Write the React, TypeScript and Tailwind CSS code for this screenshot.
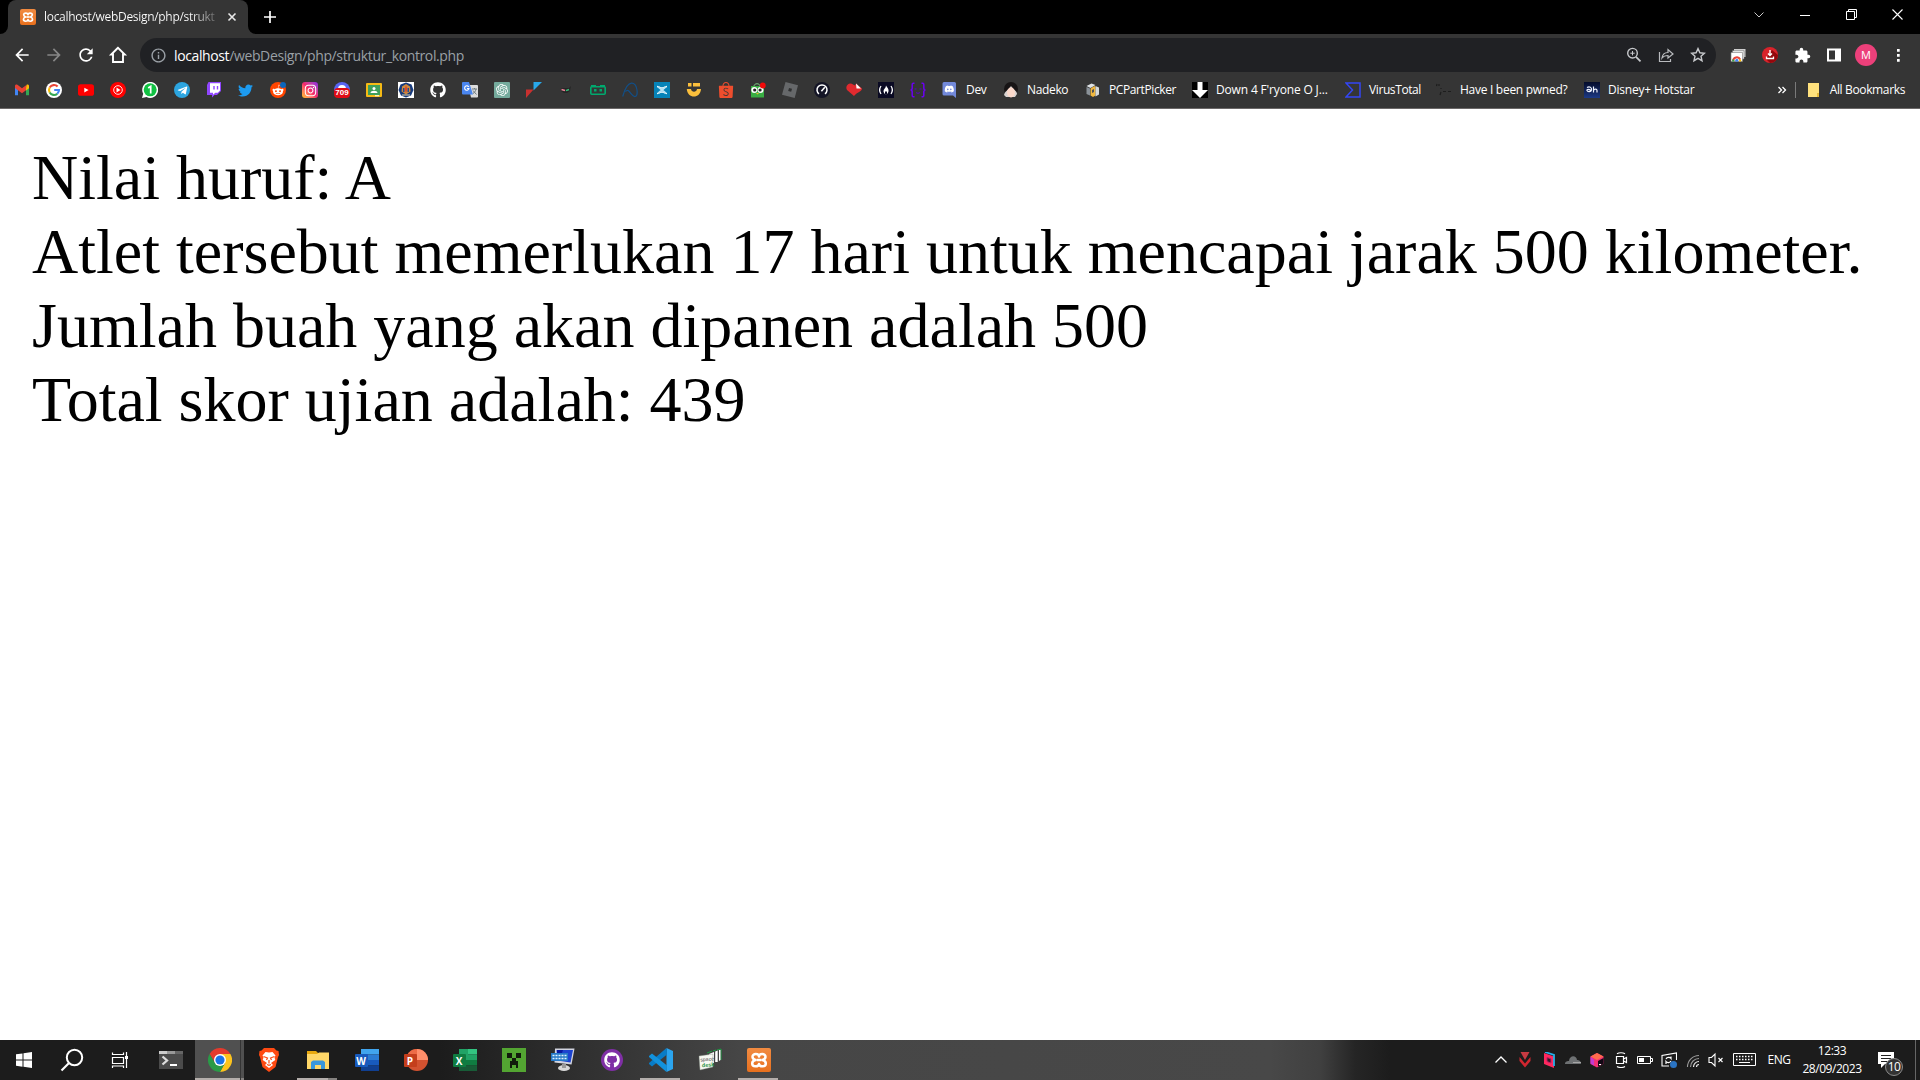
import React from "react";
import { FaTwitter, FaGithub, FaTelegramPlane, FaDiscord, FaRedditAlien, FaInstagram } from "react-icons/fa";
import { SiShopee, SiOpenai } from "react-icons/si";
import { MdArrowBack, MdArrowForward, MdRefresh, MdExtension, MdInfoOutline } from "react-icons/md";

const S = ({ children, s = 16, vb = "0 0 16 16" }: { children: React.ReactNode; s?: number; vb?: string }) => (
  <svg width={s} height={s} viewBox={vb} fill="none" className="block shrink-0">{children}</svg>
);

const Chip = ({ className, children }: { className: string; children?: React.ReactNode }) => (
  <div className={"flex size-4 shrink-0 items-center justify-center overflow-hidden " + className}>{children}</div>
);

const GoogleG = () => (
  <g strokeWidth="2.1" fill="none">
    <path d="M11.6 4.6A5 5 0 0 0 3.7 5.5" stroke="#ea4335" />
    <path d="M3.7 5.5A5 5 0 0 0 3.7 10.5" stroke="#fbbc05" />
    <path d="M3.7 10.5A5 5 0 0 0 11.3 11.7" stroke="#34a853" />
    <path d="M11.3 11.7A5 5 0 0 0 13 8H8.2" stroke="#4285f4" />
  </g>
);

const iconMarks: React.ReactNode[] = [
  <S>
    <path d="M1 4v9.3h3V7.5L1 4Z" fill="#4285f4" />
    <path d="M12 7.5v5.8h3V4l-3 3.5Z" fill="#34a853" />
    <path d="M12 4.5v4l3-2.3V4c0-1.5-1.500-1.900-2.400-1.200L12 4.500Z" fill="#fbbc04" />
    <path d="M1 4c0-1.500 1.500-1.900 2.400-1.200L8 6.300l4.400-3.300L12 8.200 8 11.200 4 8.200 1 6Z" fill="#ea4335" />
  </S>,
  <S><circle cx="8" cy="8" r="8" fill="#fff" /><GoogleG /></S>,
  <S><rect y="2.300" width="16" height="11.500" rx="2.600" fill="#f00" /><path d="m6.300 5.700 4.300 2.400-4.300 2.400Z" fill="#fff" /></S>,
  <S><circle cx="8" cy="8" r="8" fill="#f00" /><circle cx="8" cy="8" r="4.300" stroke="#fff" strokeWidth=".9" /><path d="m6.500 5.600 4 2.400-4 2.400Z" fill="#fff" /></S>,
  <S><path d="M0 16 1.200 11.800A8 8 0 1 1 4.500 15Z" fill="#fff" /><circle cx="8.200" cy="7.800" r="6.500" fill="#12c143" /><path d="M6.200 6 8.700 4.300v7.200" stroke="#fff" strokeWidth="1.700" /></S>,
  <Chip className="rounded-full bg-[#2ca5e0]"><FaTelegramPlane size={11} color="#fff" /></Chip>,
  <S>
    <path d="M2.500 0H15v9l-4 4H8.500L6 15.500V13H1V3Z" fill="#9146ff" />
    <path d="M4 1.200h10v7.300l-2.200 2.200H9.300L7 12.700v-2H4Z" fill="#fff" />
    <path d="M8 4v3.500M11.500 4v3.500" stroke="#9146ff" strokeWidth="1.400" />
  </S>,
  <FaTwitter size={15} color="#1d9bf0" />,
  <div className="relative size-4"><Chip className="rounded-full bg-[#ff4500]"><FaRedditAlien size={12} color="#fff" /></Chip><i className="absolute top-0 left-2.5 size-1.5 rounded-full bg-[#0b66bd]" /></div>,
  <Chip className="rounded-[3px] bg-linear-to-tr from-[#ffc107] via-[#f4266b] to-[#8a1ee8]"><FaInstagram size={13} color="#fff" /></Chip>,
  <div className="relative size-4">
    <div className="size-4 rounded-full bg-[#5865f2]" />
    <i className="absolute top-[3px] left-[4px] h-1 w-2 rounded-t bg-white" />
    <b className="absolute top-[6px] left-0 flex h-[10px] w-4 items-center justify-center rounded-[4px] bg-[#e00b14] font-['Liberation_Sans'] text-[8px] leading-none text-white">709</b>
  </div>,
  <S><rect y="1" width="16" height="14" rx="1" fill="#f5ba15" /><rect x="2" y="3" width="12" height="10" fill="#3f9f5b" /><circle cx="8" cy="6.500" r="1.500" fill="#fff" /><path d="M4.500 11c0-3 7-3 7 0Z" fill="#fff" /><path d="M9 13h4v1.300H9Z" fill="#fff1b8" /></S>,
  <S>
    <rect width="16" height="16" fill="#fff" /><path d="m8 .5 5.500 2L15.500 8 13 13.500 8 15.500l-5-2L.5 8l2-5.500Z" fill="#163a7c" />
    <path d="M4 4.500 8 2l4 2.500.5 5L8 12.500 3.500 9.500Z" fill="#cf8a3c" /><path d="M5 6h1.500v4H5ZM9.500 6H11v4H9.500Z" fill="#27498d" /><path d="M8 3.500 9.400 7 8 11 6.600 7Z" fill="#d9472b" /><path d="M4 13h8" stroke="#e8d3a5" />
  </S>,
  <FaGithub size={16} color="#fff" />,
  <S>
    <path d="M6 3h9a1 1 0 0 1 1 1v10a1 1 0 0 1-1 1.500H9Z" fill="#dcdcdc" /><path d="M0 1a1 1 0 0 1 1-1h6l4 12.500H1a1 1 0 0 1-1-1Z" fill="#4a86f0" />
    <path d="M6.800 5A2.200 2.200 0 1 0 7 6.500H5" stroke="#fff" strokeWidth="1.100" /><path d="M10 7h5M12.500 6v1M14 7c-.5 2.500-1.500 3.500-3 4.500M11 8.500l3.500 4" stroke="#6f7b80" />
  </S>,
  <Chip className="rounded-[1px] bg-[#74aa9c]"><SiOpenai size={12} color="#fff" /></Chip>,
  <S><path d="M7.500 0H16L7.500 8.500Z" fill="#28a8ea" /><path d="M0 7.500h7.500L0 16Z" fill="#c9302f" /></S>,
  <S><path d="M3 6h8l2-2-1 5-3 2H6L3 9Z" fill="#262626" /><path d="m3.500 7.500 3.500 1" stroke="#ee8298" strokeWidth="1.400" /><path d="m8 8.700 3-1.200" stroke="#35bd78" strokeWidth="1.400" /></S>,
  <S><rect x=".8" y="4.700" width="14.400" height="7.500" rx="1" stroke="#00a96e" strokeWidth="1.600" /><path d="M1 3h5v2H1ZM10 3h5v2h-5Z" fill="#00a96e" /><path d="M4 7h2.500v2.500H4ZM9.500 7H12v2.500H9.500Z" fill="#00a96e" /></S>,
  <S><path d="M.7 14.500C2.500 8 5 1.500 9.500 1.200c6-.3 7 12 3.800 13.300-2.500 1-4.300-3.500-6.500-5.500-1.300-1.200-2.500-.5-3.300.7" stroke="#124f87" strokeWidth="1.200" /></S>,
  <S><rect width="16" height="16" fill="#0683b8" /><path d="M3 4.500c1.500 0 2.500 1.500 5 1.500s3.500-1.500 5-1.500M3 11.500c1.500 0 2.500-1.500 5-1.500s3.500 1.500 5 1.500" stroke="#e8f7fc" strokeWidth="1.300" /><path d="m4.500 5 7 6M11.500 5l-7 6" stroke="#b9e2f2" strokeWidth="1.800" /></S>,
  <S><path d="M2 1h3.500v3.500H2ZM7 1h7v3.500H7Z" fill="#fbbf3c" /><path d="M.8 7h4.200c.3 3.500 5.700 3.500 6 0h4c-.5 10-13.700 10-14.200 0Z" fill="#fbbf3c" /></S>,
  <SiShopee size={16} color="#ee4d2d" />,
  <S>
    <path d="M1 4h13v11.500H1Z" fill="#39ae43" /><path d="M4 4c0-3 6-3 6 0" stroke="#7bc67f" /><circle cx="4.300" cy="8" r="3" fill="#fff" /><circle cx="10.500" cy="8" r="3" fill="#fff" />
    <circle cx="4.700" cy="8" r="1.600" fill="#222" /><circle cx="10.100" cy="8" r="1.600" fill="#222" /><path d="m6 11 1.500 1.500L9 11Z" fill="#f6b62c" /><circle cx="12.800" cy="3.500" r="2.900" fill="#f20a0a" />
  </S>,
  <S><path d="M3.500 0 16 3.300 12.700 16 0 12.700Z" fill="#66686a" /><path d="m7 6 3 .8-.8 3-3-.8Z" fill="#303132" /></S>,
  <S><circle cx="8" cy="8" r="8" fill="#141526" /><path d="M5 11.900A5 5 0 1 1 11 11.900" stroke="#fff" strokeWidth="1.500" /><path d="m7.400 9.300 3.400-4" stroke="#fff" strokeWidth="1.500" /></S>,
  <S><path d="M8 14 1 8C-1.500 4 3.500-.5 7 2.500l2 1 1-2 6 5c0 3-4 3-8 7.500Z" fill="#e12a2f" /><path d="m10 1.500 5 5h-4.500Z" fill="#fff" /></S>,
  <S><rect width="16" height="16" fill="#0a0a23" /><path d="M3 4c-1.700 2.500-1.700 5.500 0 8M13 4c1.700 2.500 1.700 5.500 0 8" stroke="#fff" strokeWidth="1.300" /><path d="M8 3.500c1.200 2 3 3.500 2.500 5.800C10.200 11 9.500 11.800 8 12.500 6.500 11.800 5.700 11 5.500 9.300 5.400 7 8 6 8 3.500Z" fill="#fff" /><path d="M8 9.500v3" stroke="#0a0a23" strokeWidth="2" /></S>,
  <S><path d="M4.500 1.200H3.200Q2.200 1.200 2.200 2.500V6Q2.200 8 .5 8 2.200 8 2.200 10v3.500q0 1.300 1 1.300h1.300M11.500 1.200h1.300q1 0 1 1.300V6q0 2 1.700 2-1.700 0-1.700 2v3.500q0 1.300-1 1.300h-1.300" stroke="#6b00f0" strokeWidth="1.500" /><path d="M4.500 7h2M9.500 7h2M6 10.500c1 1 3 1 4 0" stroke="#5a00c8" /></S>,
];

const DiscordOld = (
  <S><path d="M2 0h10.500A1.500 1.500 0 0 1 14 1.500V16l-3-2.500H2A1.500 1.500 0 0 1 .5 12V1.500A1.500 1.500 0 0 1 2 0Z" fill="#7289da" /><g transform="translate(2.300 2)"><FaDiscord size={10} color="#fff" /></g></S>
);

/* w is the distance from one entry's start to the next one's */
const labelled: { t: string; w: string; ls: string; icon: React.ReactNode }[] = [
  { t: "Dev", w: "w-[61px]", ls: "tracking-[-0.3px]", icon: DiscordOld },
  { t: "Nadeko", w: "w-[82px]", ls: "tracking-[-0.35px]", icon: <S><circle cx="8" cy="7" r="7" fill="#171415" /><path d="M1 13c1-4 4-4.500 7-9 3 4.500 6 5 6 8l-2 3H3Z" fill="#d9d4d2" /><ellipse cx="8" cy="10.500" rx="4" ry="5" fill="#fbd9cb" /></S> },
  { t: "PCPartPicker", w: "w-[107px]", ls: "tracking-[-0.4px]", icon: <S><path d="m1.500 4 5-2.500 4 1.500-5 3Z" fill="#dfe3e6" /><path d="m1.500 5 3.500 1.500v7L1.500 12Z" fill="#8a9198" /><path d="m5.500 6.500 4-2.500 1 1v8.500L8 15l-2.500-1.500Z" fill="#f0b73e" /><path d="M10.500 4 14 5.500v7l-3.500 2Z" fill="#d3d7da" /><path d="m7 8 2-1v3L7 11Z" fill="#4b4f55" /></S> },
  { t: "Down 4 F'ryone O J...", w: "w-[153px]", ls: "tracking-[-0.16px]", icon: <S><rect width="16" height="16" fill="#000" /><path d="M5.500 0h5v8H16l-8 8-8-8h5.500Z" fill="#fff" /></S> },
  { t: "VirusTotal", w: "w-[91px]", ls: "tracking-[-0.4px]", icon: <S><path d="M1 1h14v14H1l6.500-7Z" stroke="#3346f5" strokeWidth="1.500" /></S> },
  { t: "Have I been pwned?", w: "w-[148px]", ls: "tracking-[-0.28px]", icon: <S><path d="m1 2-.5 2M3 2v2M5 6v1M5 10l-1 3M7 9.500h3M12 9.500h3" stroke="#1d1d1d" strokeWidth="1.200" /></S> },
  { t: "Disney+ Hotstar", w: "w-[120px]", ls: "tracking-[-0.2px]", icon: <Chip className="bg-linear-to-b from-[#050c2b] to-[#1d3a86]"><S><path d="M3 5.500c2.500-1.500 5 0 4.500 2.500-.5 2-4 2-4.500.5S5 7 7 8.500M9.500 4.500v6M9.500 8.500c1-2 3.500-1.500 3.500 0v2" stroke="#eef2ff" strokeWidth="1.200" /></S></Chip> },
];

function TabStrip() {
  return (
    <header className="flex h-[34px] bg-black">
      <div className="flex w-2 items-end bg-[#353535]"><div className="h-full w-full rounded-br-lg bg-black" /></div>
      <div className="flex w-60 items-center rounded-t-lg bg-[#353535] pl-3">
        <Xampp s={16} />
        <span className="ml-2 w-[171px] bg-linear-to-r from-white from-85% to-white/25 bg-clip-text text-[12px] tracking-[-0.31px] whitespace-nowrap text-transparent">localhost/webDesign/php/strukt</span>
        <span className="ml-2.5"><S s={14} vb="0 0 14 14"><path d="m3.500 3.500 7 7M10.500 3.500l-7 7" stroke="#e8e8e8" strokeWidth="1.600" /></S></span>
      </div>
      <div className="w-2 bg-[#353535]"><div className="h-full w-full rounded-bl-lg bg-black" /></div>
      <div className="flex w-7 items-center justify-center"><S s={14} vb="0 0 14 14"><path d="M7 1v12M1 7h12" stroke="#fff" strokeWidth="1.700" /></S></div>
      <div className="ml-auto flex items-center pb-[5px]">
        <div className="flex w-[46px] justify-center"><S s={12} vb="0 0 12 12"><path d="m1.500 3.500 4.500 4.500 4.500-4.500" stroke="#c8c8c8" /></S></div>
        <div className="flex w-[46px] justify-center"><S s={10} vb="0 0 10 10"><path d="M0 5.500h10" stroke="#fff" /></S></div>
        <div className="flex w-[46px] justify-center"><S s={11} vb="0 0 11 11"><path d="M.5 2.500h8v8h-8ZM2.500 2.500v-2h8v8h-2" stroke="#fff" /></S></div>
        <div className="flex w-[46px] justify-center"><S s={11} vb="0 0 11 11"><path d="m.5.500 10 10M10.500.500l-10 10" stroke="#fff" strokeWidth="1.100" /></S></div>
      </div>
    </header>
  );
}

const Xampp = ({ s }: { s: number }) => (
  <div className="flex shrink-0 items-center justify-center rounded-[2px] bg-linear-to-b from-[#f18b41] to-[#e8701c]" style={{ width: s, height: s }}>
    <S s={s} vb="0 0 24 24">
      <path d="M12 8.500c0-3-6.500-3.500-6.500.3 0 1.700 1.500 2.700 3 3.200-2 .5-3.300 1.800-3.300 3.500 0 3.800 6.300 3.600 6.800.5.500 3.100 6.800 3.300 6.800-.5 0-1.700-1.300-3-3.300-3.500 1.500-.5 3-1.500 3-3.200C18.500 5 12 5.500 12 8.500Z" stroke="#fff" strokeWidth="2.500" strokeLinejoin="round" />
      <path d="M9.500 12h5" stroke="#fff" strokeWidth="2.500" />
    </S>
  </div>
);

function Toolbar() {
  return (
    <div className="flex h-[42px] items-center bg-[#353535]">
      <div className="flex w-[140px] items-center gap-3 pl-3">
        <MdArrowBack size={20} color="#fff" />
        <MdArrowForward size={20} color="#868686" />
        <MdRefresh size={20} color="#fff" />
        <S s={20} vb="0 0 20 20"><path d="M10 2.800 3.200 9.500H5V17h10V9.500h1.800Z" stroke="#fff" strokeWidth="1.900" /></S>
      </div>
      <div className="flex h-[34px] w-[1576px] items-center rounded-full bg-[#202124] pr-[10px] pl-[10px]">
        <MdInfoOutline size={17} color="#9aa0a6" />
        <span className="ml-[7px] text-[14px] tracking-[-0.38px] whitespace-nowrap text-[#9aa0a6]"><span className="text-white">localhost</span>/webDesign/php/struktur_kontrol.php</span>
        <div className="ml-auto flex gap-4">
          <S><circle cx="6.500" cy="6.200" r="4.800" stroke="#c7c9cc" strokeWidth="1.400" /><path d="m10 9.800 4.500 4.500" stroke="#c7c9cc" strokeWidth="1.700" /><path d="M6.500 4v4.400M4.300 6.200h4.400" stroke="#c7c9cc" /></S>
          <S><path d="M1.500 5v9.500h11V12" stroke="#b9bbbe" strokeWidth="1.200" /><path d="M4 11c.5-4 3-5.500 6-5.500V2.500L15 7l-5 4V8.500C7.500 8.500 5.500 9 4 11Z" stroke="#b9bbbe" strokeWidth="1.200" /></S>
          <S><path d="m8 1.600 1.900 4.200 4.500.4-3.400 3 1 4.500L8 11.300l-4 2.400 1-4.500-3.400-3 4.500-.4Z" stroke="#c7c9cc" strokeWidth="1.400" /></S>
        </div>
      </div>
      <div className="flex items-center pl-[14px]">
        <S><path d="M4 2h11.500v8H4Z" fill="#cfcfcf" /><path d="M2.500 3.700H14V12H2.500Z" fill="#f5f5f5" stroke="#777" strokeWidth=".6" /><path d="M1 5.500h11.500v9H1Z" fill="#fff" stroke="#777" strokeWidth=".6" /><path d="M3.200 14a3.600 3.600 0 0 1 6.900-1.500" stroke="#e8443a" strokeWidth="2" /><path d="M3.200 14.500a3.600 3.600 0 0 1 .4-2" stroke="#32a852" strokeWidth="2" /><path d="M10 12.500l.3 2" stroke="#fbbc05" strokeWidth="2" /><circle cx="6.800" cy="13.300" r="1.500" fill="#4285f4" /></S>
        <span className="ml-4"><S><circle cx="8" cy="8" r="8" fill="#d8232b" /><path d="m4 12 4 4a8 8 0 0 0 8-8l-6-5Z" fill="#94080d" /><path d="M8 3v4.500M6 6.500l2 2 2-2" stroke="#fff" strokeWidth="1.400" /><path d="M4.500 9.500v2h7v-2" stroke="#fff" strokeWidth="1.300" /></S></span>
        <span className="ml-4"><MdExtension size={17} color="#fff" /></span>
        <span className="ml-[15px]"><S><path d="M2 2.500h12v11H2Z" stroke="#fff" strokeWidth="2" /><path d="M9 2h5v12H9Z" fill="#fff" /></S></span>
        <span className="ml-[13px] flex size-[22px] items-center justify-center rounded-full bg-[#ec407a] text-[11px] text-white">M</span>
        <span className="ml-[13px]"><S><path d="M7 2h2.700v2.700H7ZM7 7h2.700v2.700H7ZM7 12h2.700v2.700H7Z" fill="#fff" /></S></span>
      </div>
    </div>
  );
}

function Bookmarks() {
  return (
    <nav className="flex h-[33px] items-center border-b border-[#6b6868] bg-[#353535] pl-[14px] text-[12px] text-white">
      <div className="flex shrink-0 items-center pb-[4px]">
        {iconMarks.map((icon, i) => <div key={i} className="w-8 shrink-0">{icon}</div>)}
        {labelled.map((b) => (
          <div key={b.t} className={"flex shrink-0 items-center gap-2 whitespace-nowrap " + b.w}>
            {b.icon}
            <span className={"leading-4 " + b.ls}>{b.t}</span>
          </div>
        ))}
      </div>
      <div className="ml-auto flex items-center pr-[15px] pb-[4px]">
        <S s={10} vb="0 0 10 10"><path d="m1.500 2 3 3-3 3M5.500 2l3 3-3 3" stroke="#fff" strokeWidth="1.300" /></S>
        <i className="ml-2 h-4 w-px bg-[#7a7a7a]" />
        <span className="ml-[10px]"><S><path d="M2 1h11v10.500L11.500 15H2Z" fill="#ffe17d" /><path d="M11 15v-4h2v4Z" fill="#e6b93a" /></S></span>
        <span className="ml-2 leading-4 tracking-[-0.36px] whitespace-nowrap">All Bookmarks</span>
      </div>
    </nav>
  );
}

const Office = ({ l, c }: { l: string; c: "w" | "x" }) => {
  const p = c === "w" ? ["#41a5ee", "#2b7cd3", "#185abd", "#103f91"] : ["#33c481", "#21a366", "#107c41", "#185c37"];
  return (
    <div className="relative size-6">
      <S s={24} vb="0 0 24 24">
        <path d="M6 1h18v5.500H6Z" fill={p[0]} /><path d="M6 6.500h18V12H6Z" fill={p[1]} /><path d="M6 12h18v5.500H6Z" fill={p[2]} /><path d="M6 17.500h18V23H6Z" fill={p[3]} />
        {c === "x" && <path d="M6 1h9v11H6Z" fill="#21a366" />}
        <rect y="6" width="13" height="13" rx="1" fill={p[2]} />
      </S>
      <b className="absolute top-[6px] left-0 flex h-[13px] w-[13px] items-center justify-center text-[10px] leading-none text-white">{l}</b>
    </div>
  );
};

const ChromeIcon = (
  <S s={24} vb="0 0 24 24">
    <path d="M1.600 6A12 12 0 0 1 22.400 6L12 6.500 7 15Z" fill="#e33b2e" />
    <path d="M22.400 6A12 12 0 0 1 12 24l5-9-5-9Z" fill="#fcc31e" />
    <path d="M1.600 6A12 12 0 0 0 12 24l5-9H7Z" fill="#2a9a48" />
    <circle cx="12" cy="12" r="6" fill="#fff" /><circle cx="12" cy="12" r="4.600" fill="#1a73e8" />
  </S>
);

const BraveIcon = (
  <S s={24} vb="0 0 24 24">
    <path d="M7 0h10l2.500 2.500L21.500 3 22 7l-1 2-2.500 10L12 24l-6.500-5L3 9 2 7l.5-4 2-.5Z" fill="#ff4a12" />
    <path d="M12 4.500 15.500 4l3 3.500-1 2 .8 2.500-4.300 3 2 2L12 20l-4-3 2-2-4.300-3 .8-2.500-1-2 3-3.500Z" fill="#fff" />
    <path d="m6.500 8.500 4 1.500-1 2M17.500 8.500l-4 1.500 1 2M12 12v3.500M10 16.500l2 .8 2-.8" stroke="#ff4a12" strokeWidth="1.200" />
  </S>
);

const apps: { icon: React.ReactNode; line?: boolean; stacked?: boolean; active?: boolean }[] = [
  { icon: <S s={24} vb="0 0 24 24"><path d="M0 3h24v18H0Z" fill="#4b4b4b" /><path d="M0 3h8v3H0Z" fill="#ccc" /><path d="M8 3h8v3H8Z" fill="#999" /><path d="M16 3h8v3h-8Z" fill="#666" /><path d="m3.500 8.500 4.500 4-4.500 4" stroke="#ddd" strokeWidth="2.300" /><path d="M11 17h7" stroke="#fff" strokeWidth="2" /></S> },
  { icon: ChromeIcon, line: true, stacked: true, active: true },
  { icon: BraveIcon },
  { icon: <S s={24} vb="0 0 24 24"><path d="M1 3h9l2 2h11v16H1Z" fill="#e9a90f" /><path d="M1 6h10l2-1.500h10V21H1Z" fill="#ffd768" /><path d="M5 21v-7l2-1.500h10l2 1.500v7h-4v-4H9v4Z" fill="#3997dc" /></S>, line: true, stacked: true },
  { icon: <Office l="W" c="w" /> },
  { icon: <div className="relative size-6"><S s={24} vb="0 0 24 24"><circle cx="13" cy="12" r="11" fill="#d35230" /><path d="M13 1a11 11 0 0 0-11 11h11Z" fill="#ed6c47" /><path d="M13 1a11 11 0 0 1 11 11H13Z" fill="#ff8f6b" /><rect y="6" width="13" height="13" rx="1" fill="#c43e1c" /></S><b className="absolute top-[6px] left-0 flex h-[13px] w-[13px] items-center justify-center text-[10px] leading-none text-white">P</b></div> },
  { icon: <Office l="X" c="x" /> },
  { icon: <S s={24} vb="0 0 24 24"><rect width="24" height="24" fill="#53a532" /><path d="M5 5h5v5H5ZM14 5h5v5h-5ZM10 10h4v3h2v7h-2v-3h-4v3H8v-7h2Z" fill="#111a0c" /></S> },
  { icon: <S s={24} vb="0 0 24 24"><path d="m4 .5 19.500 0-3 16-17-2Z" fill="#d2d4df" /><path d="m5.500 2 16.500 0-2.500 12.500-13-2Z" fill="#1c43cf" /><path d="M6 2h6l-1 3H6Z" fill="#0818a0" /><ellipse cx="13" cy="20" rx="6" ry="3" fill="#d8d8d8" /><path d="M11 16h4v4h-4Z" fill="#999" /><path d="M0 5h17v8H0Z" fill="#2578c7" /><path d="M1.500 7.500h14M1.500 10.500h14" stroke="#e1f3ff" strokeWidth="1.600" strokeDasharray="2 1" /></S> },
  { icon: <div className="flex size-[22px] items-center justify-center rounded-full bg-[#7f2fa5]"><FaGithub size={16} color="#fff" /></div> },
  { icon: <S s={24} vb="0 0 24 24"><path d="m17.500 0 6.500 3v18l-6.500 3Z" fill="#2ba4ee" /><path d="M17.500 0 18 6.500 3 18.500 0 16v-1Z" fill="#087cc7" /><path d="M0 9V8l3-2.500L18 17.500 17.500 24Z" fill="#1292dd" /></S>, line: true },
  { icon: <S s={24} vb="0 0 24 24"><path d="m9 5 5-2M15 3l3-1M19 2l4-1v11" stroke="#1e9b43" /><path d="m11 6 5-2v11h-5ZM17.200 3.500l2.500-1V14h-2.500ZM21 2h1.500v10L21 13Z" fill="#fff" /><path d="m1 8 14-2v13L2 22Z" fill="#f7f8f3" stroke="#7d8a7d" strokeWidth=".4" /><text x="2.500" y="13" fontSize="5" fontFamily="Liberation Sans" fill="#444" transform="rotate(-5 8 12)">space</text><text x="4" y="19" fontSize="5.500" fontFamily="Liberation Sans" fontWeight="bold" fill="#289044" transform="rotate(-5 8 18)">desk</text></S> },
  { icon: <Xampp s={24} />, line: true },
];

function Taskbar() {
  return (
    <footer className="flex h-10 bg-[linear-gradient(90deg,#1c1c1c_0,#1c1c1c_440px,#464646_740px,#484848_1270px,#404040_1320px,#252525_1355px,#1c1c1c_1390px)]">
      <div className="flex w-12 items-center justify-center"><S><path d="m0 2.300 6.500-.9v6.200H0ZM7.500 1.200 16 0v7.600H7.500ZM0 8.500h6.500v6.200L0 13.800ZM7.500 8.500H16V16l-8.500-1.200Z" fill="#fff" /></S></div>
      <div className="flex w-12 items-center justify-center"><S s={24} vb="0 0 24 24"><circle cx="14.500" cy="9.500" r="7.700" stroke="#fff" strokeWidth="2" /><path d="m9 15-7.500 7.500" stroke="#fff" strokeWidth="2.200" /></S></div>
      <div className="flex w-[49px] items-center justify-center pr-[2px]"><S s={18} vb="0 0 18 18"><path d="M1.500 1.500v2h11v-2M1.500 6.500h11v6h-11ZM1.500 17v-2h11v2M15.500 1v16" stroke="#fff" strokeWidth="1.200" /><path d="M14 5h3v3h-3Z" fill="#fff" /></S></div>
      <div className="flex pl-[1px]">
        {apps.map((a, i) => (
          <div key={i} className={"relative flex w-[49px] items-center justify-center " + (a.active ? "bg-[#505050]" : "")}>
            {a.icon}
            {a.line && <i className="absolute bottom-0 left-[4px] h-0.5 w-10 bg-[#b4aeab]" />}
            {a.active && <i className="absolute bottom-0 left-0 h-0.5 w-[49px] bg-[#b4aeab]" />}
            {a.active && <i className="absolute top-0 right-[3px] h-10 w-px bg-[#343434]" />}
            {a.stacked && <i className={"absolute bottom-0 h-0.5 bg-[#858280] " + (a.active ? "right-0 w-[3px]" : "right-[5px] w-[9px]")} />}
          </div>
        ))}
      </div>
      <div className="ml-auto flex items-center text-[12px] text-white">
        <div className="flex w-6 justify-center"><S s={14} vb="0 0 14 14"><path d="m1.500 9.500 5.500-5.500 5.500 5.500" stroke="#fff" strokeWidth="1.300" /></S></div>
        <div className="flex w-6 justify-center"><S><path d="M3.500 0h9L8 8Z" fill="#c73a42" /><path d="M2.500 5v4L8 15.500 13.500 9V5L8 11.500Z" fill="#d1262f" /></S></div>
        <div className="flex w-6 justify-center"><S><path d="m3 1 10 3.500V16L3 12Z" fill="#ff285e" /><path d="m4 0 9 3v11" stroke="#26afe8" strokeWidth="1.800" /><path d="m6 5.500 4 1.300V11L6 9.500Z" fill="#321826" stroke="#b91f66" /></S></div>
        <div className="flex w-6 justify-center"><S><path d="M0 12c0-3 3-3 4-3 .5-6 7.500-6 8-1 3-.5 4 2 4 4Z" fill="#6e7173" /><path d="M8 10.500h8" stroke="#a6a6a6" /></S></div>
        <div className="flex w-6 justify-center"><S><path d="m8 1 6.500 3.500v7L8 15.500 1.500 12V4.500Z" fill="#f32f76" /><path d="m8 1 6.500 3.500L8 8 1.500 4.500Z" fill="#ff6b4d" /><path d="M1.500 4.500 5 8v5.500l-3.500-2Z" fill="#c23bd2" /><path d="m9 9 5.500-3v5.500L9 14.500Z" fill="#120814" /><path d="M10 12.500h2" stroke="#fff" /></S></div>
        <div className="flex w-6 justify-center"><S><path d="M4 1.700c2-1.300 6-1.300 8 0M4 14.500c2 1.300 6 1.300 8 0M3.500 4.500h7v7h-7ZM10.500 7l3-1.500v5l-3-1.500" stroke="#fff" strokeWidth="1.200" /></S></div>
        <div className="flex w-6 justify-center"><S><path d="M.5 4.500h13v7H.5ZM14 6.500h1.500v3H14" stroke="#fff" /><path d="M2 6h5v4H2Z" fill="#fff" /></S></div>
        <div className="flex w-6 justify-center"><S><path d="M8 14H1V3.500L15.500 1v7" stroke="#fff" strokeWidth="1.100" /><path d="M5 7c1-2 4-2 5-.5V4.500M10 9c-1 2-4 2-5 .5V12" stroke="#fff" strokeWidth="1.200" /><circle cx="12.500" cy="12.500" r="3.500" fill="#2b74c3" /></S></div>
        <div className="flex w-[23px] justify-center"><S><path d="M2.500 15A11.500 11.500 0 0 1 14 3.500M5.500 15A8.500 8.500 0 0 1 14 6.500" stroke="#9b9b9b" strokeWidth="1.100" /><path d="M8.500 15A5.500 5.500 0 0 1 14 9.500M11.500 15A2.500 2.500 0 0 1 14 12.500" stroke="#e8e8e8" strokeWidth="1.200" /></S></div>
        <div className="flex w-6 justify-center"><S><path d="M1 5.500h2.500L7 2v12l-3.500-3.500H1Z" stroke="#fff" strokeWidth="1.100" /><path d="m10.500 6 4 4M14.500 6l-4 4" stroke="#fff" strokeWidth="1.100" /></S></div>
        <div className="flex w-8 justify-center"><svg width="23" height="14" viewBox="0 0 23 14" fill="none"><path d="M.5.500h22v12H.5Z" stroke="#fff" /><path d="M3 3.500h17M3 6.500h17" stroke="#fff" strokeWidth="1.300" strokeDasharray="1.500 1.500" /><path d="M6 9.500h11" stroke="#fff" /></svg></div>
        <span className="w-[38px] text-center tracking-[-0.4px]">ENG</span>
        <div className="flex w-[68px] flex-col text-center tracking-[-0.45px] whitespace-nowrap">
          <span className="leading-[18px]">12:33</span>
          <span className="leading-[18px]">28/09/2023</span>
        </div>
        <div className="relative ml-[12px] h-10 w-[37px]">
          <svg width="18" height="18" viewBox="0 0 18 18" className="absolute top-3 left-0"><path d="M0 0h16v12H7l-4 4v-4H0Z" fill="#fff" /><path d="M3 3.500h10M3 6.500h10M3 9.500h6" stroke="#222" /></svg>
          <span className="absolute top-[18px] left-[7px] flex size-[18px] items-center justify-center rounded-full border border-[#8b8b8b] bg-[#333] text-[12px] tracking-[-0.5px]">10</span>
        </div>
        <i className="mr-1 h-10 w-px bg-[#666]" />
      </div>
    </footer>
  );
}

export default function App() {
  return (
    <div className="flex h-[1080px] w-[1920px] flex-col overflow-hidden bg-white font-['Open_Sans',sans-serif]">
      <TabStrip />
      <Toolbar />
      <Bookmarks />
      <main className="flex-1 p-8 font-['Liberation_Serif',serif] text-[64px] leading-[74px] whitespace-nowrap text-black">
        <p>Nilai huruf: A</p>
        <p>Atlet tersebut memerlukan 17 hari untuk mencapai jarak 500 kilometer.</p>
        <p>Jumlah buah yang akan dipanen adalah 500</p>
        <p>Total skor ujian adalah: 439</p>
      </main>
      <Taskbar />
    </div>
  );
}
